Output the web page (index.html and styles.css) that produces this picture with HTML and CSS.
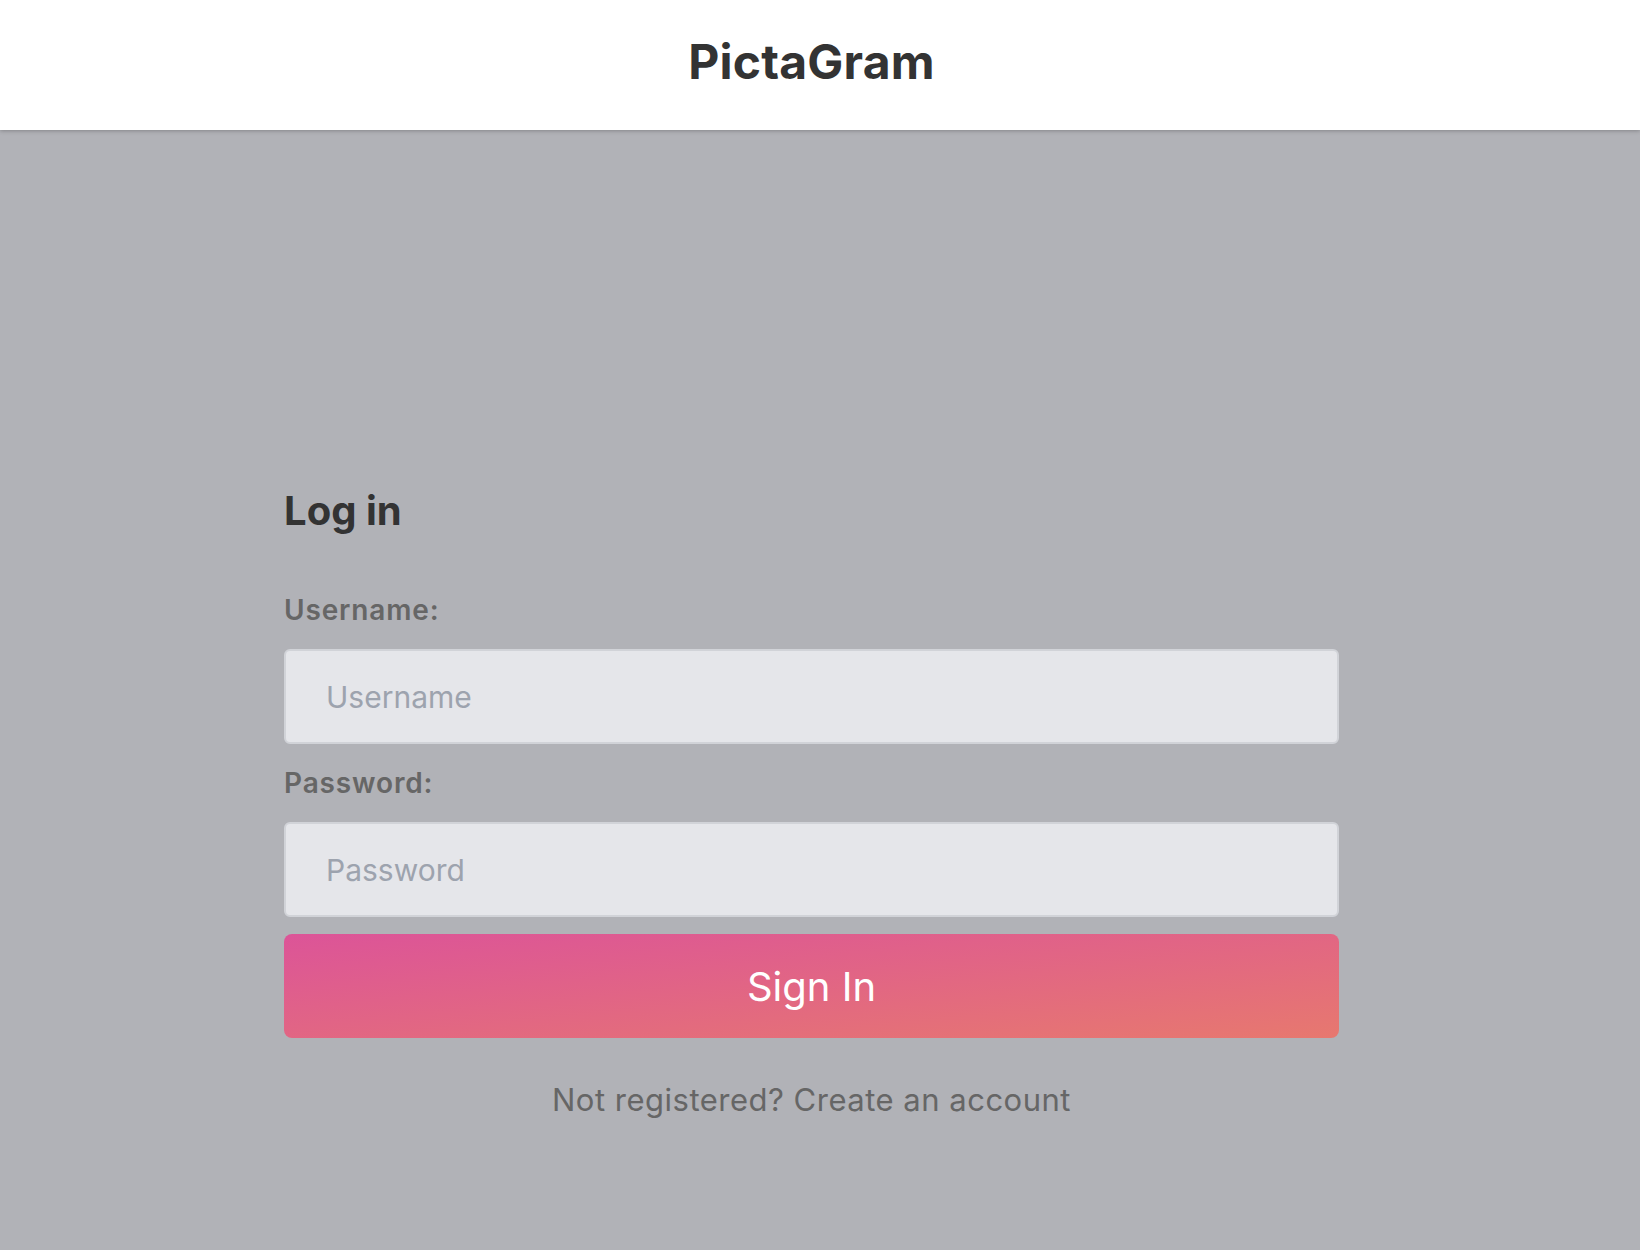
FILE: index.html
```html
<!DOCTYPE html>
<html lang="en">
<head>
<meta charset="utf-8">
<title>PictaGram</title>
<link rel="stylesheet" href="styles.css">
</head>
<body>
<header class="topbar">
  <h1 class="brand">PictaGram</h1>
</header>
<main class="stage">
  <form class="login">
    <h2 class="login-title">Log in</h2>
    <label class="field-label" for="username">Username:</label>
    <input class="field-input" id="username" type="text" placeholder="Username">
    <label class="field-label" for="password">Password:</label>
    <input class="field-input" id="password" type="password" placeholder="Password">
    <button class="submit" type="button">Sign In</button>
    <p class="register">Not registered? Create an account</p>
  </form>
</main>
</body>
</html>
```
FILE: styles.css
```css
* { box-sizing: border-box; }

html, body {
  margin: 0;
  height: 100%;
}

body {
  font-family: Inter, "Noto Sans", "Liberation Sans", sans-serif;
  background: #b1b2b7;
  display: flex;
  flex-direction: column;
}

.topbar {
  background: #ffffff;
  height: 130px;
  padding: 33px 17px 0 0;
  box-shadow: 0 1px 4px rgba(0, 0, 0, 0.25);
  position: relative;
  z-index: 1;
  flex: none;
}

.brand {
  margin: 0;
  text-align: center;
  font-size: 48px;
  line-height: 58px;
  font-weight: 700;
  letter-spacing: 0.2px;
  color: #333333;
}

.stage {
  flex: 1;
  padding: 357px 17px 0 0;
}

.login {
  width: 65%;
  margin: 0 auto;
  display: flex;
  flex-direction: column;
}

.login-title {
  margin: 0 0 58px;
  font-size: 40px;
  line-height: 48px;
  font-weight: 700;
  color: #333333;
}

.field-label {
  font-size: 28px;
  line-height: 34px;
  font-weight: 600;
  letter-spacing: 0.85px;
  color: #666666;
  margin-bottom: 22px;
}

.field-input {
  height: 95px;
  border: 2px solid #d1d3d8;
  border-radius: 6px;
  background: #e5e6ea;
  padding: 0 40px;
  font-family: inherit;
  font-size: 30px;
  color: #333333;
  margin-bottom: 22px;
  outline: none;
}

.field-input::placeholder {
  color: #9da3ae;
}

#password { margin-bottom: 17px; }

.submit {
  height: 104px;
  border: none;
  border-radius: 8px;
  background: linear-gradient(to bottom right, #dc5498, #e7786f);
  color: #ffffff;
  font-family: inherit;
  font-size: 40px;
  font-weight: 400;
  cursor: pointer;
}

.register {
  margin: 44px 0 0;
  text-align: center;
  font-size: 31px;
  line-height: 36px;
  letter-spacing: 0.5px;
  color: #666666;
}
```
